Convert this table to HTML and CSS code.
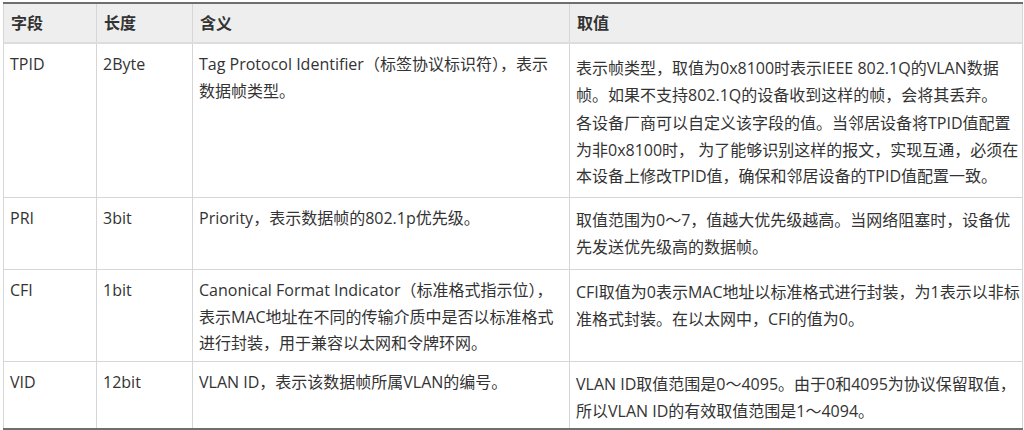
FILE: index.html
```html
<!DOCTYPE html>
<html lang="zh-CN">
<head>
<meta charset="utf-8">
<title>VLAN Tag 字段</title>
<link rel="stylesheet" href="styles.css">
</head>
<body>
<table class="spec">
  <colgroup>
    <col class="c-field">
    <col class="c-len">
    <col class="c-mean">
    <col class="c-value">
  </colgroup>
  <thead>
    <tr>
      <th>字段</th>
      <th>长度</th>
      <th>含义</th>
      <th>取值</th>
    </tr>
  </thead>
  <tbody>
    <tr class="r-tpid">
      <td>TPID</td>
      <td>2Byte</td>
      <td>Tag Protocol Identifier（标签协议标识符），表示数据帧类型。</td>
      <td class="val">
        <p class="first">表示帧类型，取值为0x8100时表示IEEE 802.1Q的VLAN数据<br>帧。如果不支持802.1Q的设备收到这样的帧，会将其丢弃。</p>
        <p>各设备厂商可以自定义该字段的值。当邻居设备将TPID值配置为非0x8100时， 为了能够识别这样的报文，实现互通，必须在本设备上修改TPID值，确保和邻居设备的TPID值配置一致。</p>
      </td>
    </tr>
    <tr class="r-pri">
      <td>PRI</td>
      <td>3bit</td>
      <td>Priority，表示数据帧的802.1p优先级。</td>
      <td class="val"><p>取值范围为0～7，值越大优先级越高。当网络阻塞时，设备优先发送优先级高的数据帧。</p></td>
    </tr>
    <tr class="r-cfi">
      <td>CFI</td>
      <td>1bit</td>
      <td>Canonical Format Indicator（标准格式指示位），表示MAC地址在不同的传输介质中是否以标准格式进行封装，用于兼容以太网和令牌环网。</td>
      <td class="val"><p>CFI取值为0表示MAC地址以标准格式进行封装，为1表示以非标准格式封装。在以太网中，CFI的值为0。</p></td>
    </tr>
    <tr class="r-vid">
      <td>VID</td>
      <td>12bit</td>
      <td>VLAN ID，表示该数据帧所属VLAN的编号。</td>
      <td class="val"><p>VLAN ID取值范围是0～4095。由于0和4095为协议保留取值，所以VLAN ID的有效取值范围是1～4094。</p></td>
    </tr>
  </tbody>
</table>
</body>
</html>
```

FILE: styles.css
```css
html, body {
  margin: 0;
  padding: 0;
  background: #ffffff;
}

body {
  padding: 2px 0 0 3px;
  font-family: "Open Sans", "Noto Sans CJK SC", sans-serif;
  font-size: 16px;
  color: #333333;
}

.spec {
  width: 1019px;
  table-layout: fixed;
  border-collapse: collapse;
  border-top: 2px solid #6e6e6e;
  border-bottom: 2px solid #6e6e6e;
  border-left: 1px solid #d6d6d6;
  border-right: 1px solid #d6d6d6;
}

.c-field { width: 93px; }
.c-len { width: 96px; }
.c-mean { width: 377px; }
.c-value { width: 453px; }

.spec th {
  background: #eeeeee;
  text-align: left;
  font-weight: 700;
  height: 38px;
  padding: 0 6px 0 7px;
  line-height: 24px;
  border-left: 1px solid #d6d6d6;
  border-right: 1px solid #d6d6d6;
  border-bottom: 2px solid #dddddd;
}

.spec td {
  vertical-align: top;
  padding: 7px 9px 4px 6px;
  line-height: 26.5px;
  border: 1px solid #d6d6d6;
}

.spec td.val {
  padding-right: 1px;
}

.spec td.val p {
  margin: 2px 0 0;
}

.spec td.val p.first {
  margin-top: 4px;
}

.spec td.val p + p {
  margin-top: 2px;
}

.r-tpid td { height: 142px; }
.r-pri td { height: 60px; }
.r-cfi td { height: 80px; }
.r-vid td { height: 54px; }
```
